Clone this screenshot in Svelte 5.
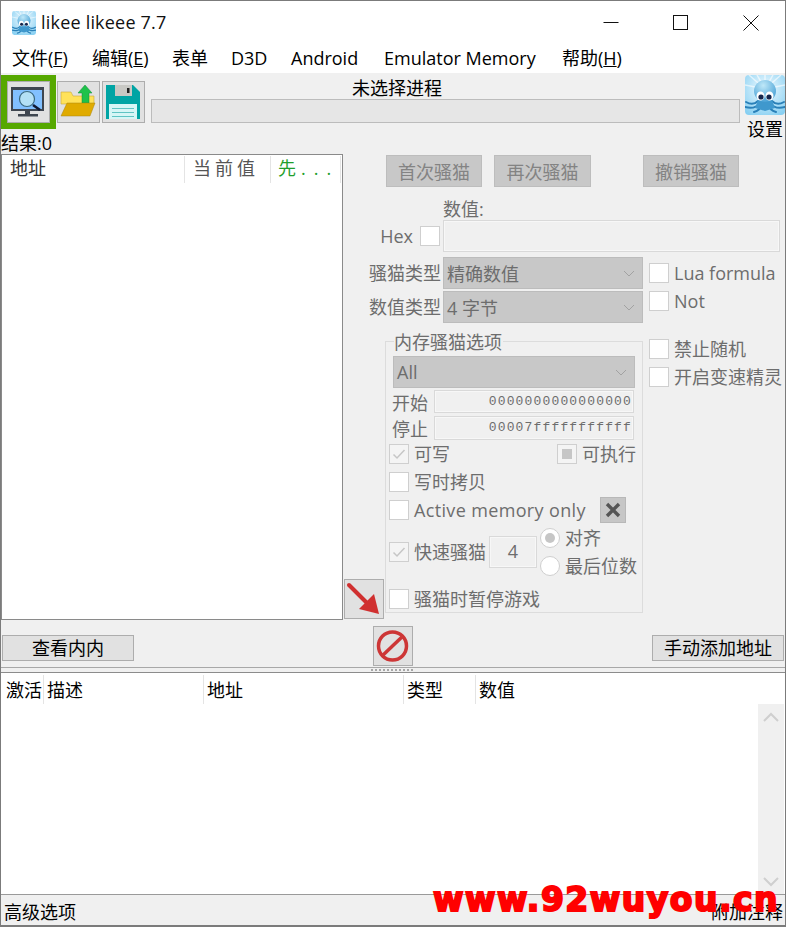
<script>
  const menus = [
    { label: '文件(', key: 'F', end: ')', w: 80 },
    { label: '编辑(', key: 'E', end: ')', w: 80 },
    { label: '表单', w: 59 },
    { label: 'D3D', w: 60 },
    { label: 'Android', w: 93 },
    { label: 'Emulator Memory', w: 178 },
    { label: '帮助(', key: 'H', end: ')', w: 80 }
  ]
  const columns = [
    { label: '激活', w: 43 },
    { label: '描述', w: 160 },
    { label: '地址', w: 200 },
    { label: '类型', w: 72 },
    { label: '数值', w: 100 }
  ]
</script>

{#snippet octopus(size)}
  <svg width={size} height={size} viewBox="0 0 40 40">
    <defs>
      <radialGradient id="oct-{size}" cx="50%" cy="35%" r="75%">
        <stop offset="0" stop-color="#f2fbff" />
        <stop offset="1" stop-color="#86cff2" />
      </radialGradient>
      <radialGradient id="head-{size}" cx="42%" cy="25%" r="75%">
        <stop offset="0" stop-color="#bfe8f8" />
        <stop offset="1" stop-color="#4aa2d6" />
      </radialGradient>
    </defs>
    <rect width="40" height="40" rx="4" fill="url(#oct-{size})" />
    <path d="M20 14L4 0M20 14L12 0M20 14L20 0M20 14L28 0M20 14L36 0M20 14L0 10M20 14L40 10" stroke="#fff" stroke-opacity="0.600" stroke-width="1.500" />
    <path d="M1 27c5 3 9 2 12-1M39 27c-5 3-9 2-12-1M0 32c7 2 12 0 15-4M40 32c-7 2-12 0-15-4M9 37c4-1 7-4 8-8M31 37c-4-1-7-4-8-8" fill="none" stroke="#2a80b8" stroke-width="2" stroke-linecap="round" />
    <path d="M13 25h14l3 8-10 3-10-3z" fill="#3f98cd" />
    <ellipse cx="20" cy="16" rx="11" ry="11" fill="url(#head-{size})" />
    <ellipse cx="15.500" cy="21" rx="4" ry="4.600" fill="#fff" />
    <ellipse cx="24.500" cy="21" rx="4" ry="4.600" fill="#fff" />
    <circle cx="16" cy="22" r="2.600" fill="#16264c" />
    <circle cx="24" cy="22" r="2.600" fill="#16264c" />
  </svg>
{/snippet}

{#snippet check(kind = '')}
  <span class="box" class:filled={kind !== ''}>
    {#if kind === 'tick'}
      <svg width="14" height="14" viewBox="0 0 14 14"><path d="M1.500 7.500l3.500 3.500 7.500-8" fill="none" stroke="#c6c6c6" stroke-width="1.500" /></svg>
    {:else if kind === 'square'}
      <span class="square"></span>
    {/if}
  </span>
{/snippet}

{#snippet chevron()}
  <svg class="chev" width="12" height="7" viewBox="0 0 12 7"><path d="M1 1l5 5 5-5" fill="none" stroke="#a2a2a2" /></svg>
{/snippet}

<div class="window">
  <header class="titlebar">
    <span class="app-icon">{@render octopus(24)}</span>
    <span class="title">likee likeee 7.7</span>
    <div class="winbtns">
      <svg width="16" height="16" viewBox="0 0 16 16"><path d="M0.500 7.500h15" stroke="#111" /></svg>
      <svg width="16" height="16" viewBox="0 0 16 16"><rect x="0.500" y="0.500" width="14" height="14" fill="none" stroke="#111" /></svg>
      <svg width="16" height="16" viewBox="0 0 16 16"><path d="M0.500 0.500l15 15M15.500 0.500l-15 15" stroke="#111" /></svg>
    </div>
  </header>

  <nav class="menubar">
    {#each menus as m}
      <span class="menu" style="width: {m.w}px">{m.label}{#if m.key}<u>{m.key}</u>{m.end}{/if}</span>
    {/each}
  </nav>

  <div class="toolbar">
    <div class="selected">
      <button class="tool" aria-label="选择进程">
        <svg width="41" height="40" viewBox="0 0 41 40">
          <rect x="3" y="5" width="33" height="24" fill="#3f4650" />
          <rect x="5" y="8" width="29" height="19" fill="#82c0ff" />
          <rect x="17" y="29" width="5" height="5" fill="#3f4650" />
          <rect x="10" y="32" width="20" height="2.500" fill="#3f4650" />
          <path d="M25 23l7 5" stroke="#111830" stroke-width="2.600" />
          <circle cx="19" cy="17" r="7.500" fill="#b4e0f5" stroke="#3c6a80" stroke-width="1.200" />
        </svg>
      </button>
    </div>
    <button class="tool" aria-label="打开">
      <svg width="41" height="40" viewBox="0 0 41 40">
        <path d="M3 10h10l2 4h21v8H3z" fill="#ffe25a" stroke="#c9a93a" stroke-width="0.600" />
        <path d="M27 3l7 8h-3v10h-7V11h-4z" fill="#1ec24a" stroke="#14883a" stroke-width="0.500" />
        <path d="M9 21h28l-5 13H3z" fill="#e0ab00" stroke="#a88410" stroke-width="0.500" />
      </svg>
    </button>
    <button class="tool save" aria-label="保存">
      <svg width="41" height="40" viewBox="0 0 41 40">
        <path d="M3 3h27l7 7v27H3z" fill="#00a4a4" />
        <rect x="12" y="3" width="17" height="11" fill="#c8c8c4" />
        <rect x="24" y="6" width="2.500" height="5" fill="#222" />
        <rect x="6" y="22" width="28" height="15" fill="#d6f6f6" />
        <path d="M9 26.500h22M9 30.500h22M9 34.500h22" stroke="#5fc4c4" />
      </svg>
    </button>
    <div class="process">
      <span class="process-name">未选择进程</span>
      <div class="progress"></div>
    </div>
    <div class="settings">
      {@render octopus(40)}
      <span>设置</span>
    </div>
  </div>

  <div class="count">结果:0</div>

  <div class="main">
    <section class="found">
      <div class="found-head">
        <span class="fh addr">地址</span>
        <span class="fh cur">当前值</span>
        <span class="fh prev">先<span class="dots">...</span></span>
      </div>
    </section>

    <section class="scan">
      <div class="scan-buttons">
        <button class="off first">首次骚猫</button>
        <button class="off next">再次骚猫</button>
        <button class="off undo">撤销骚猫</button>
      </div>

      <div class="value-label">数值:</div>
      <div class="hex-row">
        <span class="hex">Hex</span>
        {@render check()}
        <div class="value-input"></div>
      </div>

      <div class="type-row">
        <span class="type-label">骚猫类型</span>
        <div class="select wide"><span>精确数值</span>{@render chevron()}</div>
        <label class="opt lua">{@render check()}<span>Lua formula</span></label>
      </div>
      <div class="type-row second">
        <span class="type-label">数值类型</span>
        <div class="select wide"><span>4 字节</span>{@render chevron()}</div>
        <label class="opt not">{@render check()}<span>Not</span></label>
      </div>

      <div class="lower">
        <div class="arrow-col">
          <button class="icon-btn" aria-label="添加">
            <svg width="38" height="38" viewBox="0 0 38 38">
              <path d="M4 5l18 18" stroke="#d03030" stroke-width="4" stroke-linecap="round" />
              <path d="M34 34L14 29l15-15z" fill="#d03030" />
            </svg>
          </button>
        </div>

        <div class="group">
          <span class="legend">内存骚猫选项</span>
          <div class="select all"><span>All</span>{@render chevron()}</div>
          <div class="range first-range"><span>开始</span><div class="addr-field">0000000000000000</div></div>
          <div class="range second-range"><span>停止</span><div class="addr-field">00007fffffffffff</div></div>
          <div class="row r-write">
            <label class="opt">{@render check('tick')}<span>可写</span></label>
            <label class="opt exec">{@render check('square')}<span>可执行</span></label>
          </div>
          <div class="row r-copy"><label class="opt">{@render check()}<span>写时拷贝</span></label></div>
          <div class="row r-active">
            <label class="opt">{@render check()}<span class="en">Active memory only</span></label>
            <button class="x-btn" aria-label="关闭">
              <svg width="16" height="16" viewBox="0 0 16 16"><path d="M2 2l12 12M14 2L2 14" stroke="#555" stroke-width="3.400" /></svg>
            </button>
          </div>
          <div class="row r-fast">
            <label class="opt">{@render check('tick')}<span>快速骚猫</span></label>
            <div class="align-field">4</div>
            <div class="radios">
              <label class="opt"><span class="radio on"></span><span>对齐</span></label>
              <label class="opt"><span class="radio"></span><span>最后位数</span></label>
            </div>
          </div>
          <div class="row r-pause"><label class="opt">{@render check()}<span>骚猫时暂停游戏</span></label></div>
        </div>

        <div class="side-opts">
          <label class="opt">{@render check()}<span>禁止随机</span></label>
          <label class="opt">{@render check()}<span>开启变速精灵</span></label>
        </div>
      </div>
    </section>
  </div>

  <div class="actions">
    <button class="plain view">查看内内</button>
    <button class="icon-btn stop" aria-label="停止">
      <svg width="38" height="38" viewBox="0 0 38 38">
        <circle cx="18.500" cy="19" r="14" fill="none" stroke="#cd3636" stroke-width="3.500" />
        <path d="M8 29L29 9" stroke="#cd3636" stroke-width="3.500" />
      </svg>
    </button>
    <button class="plain add">手动添加地址</button>
  </div>

  <div class="splitter"><span class="grip"></span></div>

  <section class="table">
    <div class="table-head">
      {#each columns as c}
        <span class="th" style="width: {c.w}px">{c.label}</span>
      {/each}
    </div>
    <div class="table-body">
      <div class="scrollbar">
        <svg width="18" height="10" viewBox="0 0 18 10"><path d="M2 9l7-7 7 7" fill="none" stroke="#cfcfcf" stroke-width="2" /></svg>
        <svg width="18" height="10" viewBox="0 0 18 10"><path d="M2 1l7 7 7-7" fill="none" stroke="#cfcfcf" stroke-width="2" /></svg>
      </div>
    </div>
  </section>

  <footer class="status">
    <span>高级选项</span>
    <span>附加注释</span>
  </footer>

  <div class="watermark">www.92wuyou.cn</div>
</div>

<style>
  :global(body) {
    margin: 0;
    background: #f0f0f0;
  }
  .window {
    position: relative;
    width: 786px;
    height: 927px;
    box-sizing: border-box;
    border: 1px solid #7b7b7b;
    border-bottom-width: 2px;
    background: #f0f0f0;
    overflow: hidden;
    font-family: "Open Sans", "Noto Sans CJK SC", sans-serif;
    font-size: 18px;
    color: #000;
  }
  button {
    font: inherit;
    padding: 0;
  }
  .titlebar {
    height: 43px;
    background: #fff;
    display: flex;
    align-items: center;
  }
  .app-icon {
    display: flex;
    margin-left: 11px;
  }
  .title {
    margin: -2px 0 0 5px;
    font-size: 18px;
    letter-spacing: 0.200px;
    color: #111;
  }
  .winbtns {
    margin-left: auto;
    margin-right: 26px;
    display: flex;
    gap: 54px;
  }
  .menubar {
    height: 29px;
    background: #fff;
    display: flex;
    align-items: center;
    padding-left: 11px;
  }
  .menu {
    white-space: nowrap;
    line-height: 29px;
  }
  .toolbar {
    height: 61px;
    display: flex;
    align-items: flex-start;
  }
  .selected {
    width: 43px;
    height: 42px;
    margin-top: 2px;
    padding: 6px;
    background: #56a800;
  }
  .tool {
    width: 43px;
    height: 42px;
    margin-top: 8px;
    box-sizing: border-box;
    border: 1px solid #adadad;
    background: #e1e1e1;
    display: block;
  }
  .selected .tool {
    margin-top: 0;
  }
  .selected + .tool {
    margin-left: 1px;
  }
  .save {
    margin-left: 2px;
  }
  .process {
    width: 589px;
    margin-left: 6px;
    display: flex;
    flex-direction: column;
    align-items: flex-start;
  }
  .process-name {
    height: 26px;
    line-height: 30px;
    margin-left: 201px;
  }
  .progress {
    width: 100%;
    height: 24px;
    box-sizing: border-box;
    border: 1px solid #bcbcbc;
    background: #e6e6e6;
  }
  .settings {
    width: 40px;
    margin-left: 5px;
    margin-top: 2px;
    display: flex;
    flex-direction: column;
    align-items: center;
  }
  .settings span {
    line-height: 28px;
  }
  .count {
    height: 20px;
    line-height: 18px;
  }
  .main {
    height: 466px;
    display: flex;
  }
  .found {
    width: 342px;
    box-sizing: border-box;
    border: 1px solid #8a8a8a;
    background: #fff;
  }
  .found-head {
    height: 28px;
    display: flex;
    align-items: center;
  }
  .fh {
    box-sizing: border-box;
    height: 27px;
    line-height: 25px;
    border-right: 1px solid #e4e4e4;
    white-space: nowrap;
  }
  .addr {
    width: 183px;
    padding-left: 8px;
    color: #333;
  }
  .cur {
    width: 86px;
    padding-left: 8px;
    color: #555;
    letter-spacing: 4px;
  }
  .prev {
    width: 70px;
    padding-left: 7px;
    color: #1f9e2c;
  }
  .dots {
    margin-left: 5px;
    letter-spacing: 8px;
  }
  .scan {
    flex: 1;
    color: #6d6d6d;
  }
  .scan-buttons {
    display: flex;
    margin: 1px 0 0 43px;
  }
  .off {
    height: 32px;
    box-sizing: border-box;
    border: 1px solid #bdbdbd;
    background: #c8c8c8;
    color: #838383;
  }
  .first { width: 96px; }
  .next { width: 97px; margin-left: 12px; }
  .undo { width: 96px; margin-left: 52px; }
  .value-label {
    height: 20px;
    line-height: 20px;
    margin: 12px 0 1px 100px;
  }
  .hex-row {
    height: 32px;
    display: flex;
    align-items: center;
  }
  .hex {
    width: 70px;
    margin-right: 7px;
    text-align: right;
  }
  .value-input {
    width: 337px;
    height: 32px;
    margin-left: 3px;
    box-sizing: border-box;
    border: 1px solid #d9d9d9;
    outline: 1px solid #f7f7f7;
    outline-offset: -2px;
    background: #f0f0f0;
  }
  .type-row {
    display: flex;
    align-items: flex-start;
    height: 32px;
    margin-top: 5px;
  }
  .type-row.second {
    margin-top: 2px;
  }
  .type-label {
    width: 100px;
    box-sizing: border-box;
    padding-left: 26px;
    line-height: 32px;
    white-space: nowrap;
  }
  .select {
    height: 32px;
    box-sizing: border-box;
    border: 1px solid #bcbcbc;
    background: #c8c8c8;
    display: flex;
    align-items: center;
    justify-content: space-between;
    padding: 0 7px 0 3px;
  }
  .wide {
    width: 200px;
  }
  .opt {
    height: 20px;
    line-height: 20px;
    display: flex;
    align-items: center;
    gap: 5px;
    flex: none;
    white-space: nowrap;
  }
  .lua {
    margin: 6px 0 0 6px;
  }
  .not {
    margin: 0 0 0 6px;
  }
  .box {
    width: 20px;
    height: 20px;
    flex: none;
    box-sizing: border-box;
    border: 1px solid #cfcfcf;
    background: #fff;
    display: inline-flex;
    align-items: center;
    justify-content: center;
  }
  .box.filled {
    background: #f4f4f4;
  }
  .square {
    width: 10px;
    height: 10px;
    background: #c6c6c6;
  }
  .lower {
    display: flex;
    height: 281px;
    margin-top: 16px;
  }
  .arrow-col {
    width: 42px;
    display: flex;
    align-items: flex-end;
    padding: 0 0 1px 1px;
    box-sizing: border-box;
  }
  .icon-btn {
    width: 40px;
    height: 40px;
    box-sizing: border-box;
    border: 1px solid #adadad;
    background: #e1e1e1;
    display: flex;
    align-items: center;
    justify-content: center;
  }
  .group {
    width: 258px;
    height: 272px;
    margin-top: 2px;
    box-sizing: border-box;
    border: 1px solid #dcdcdc;
    padding: 0 7px;
    display: flex;
    flex-direction: column;
  }
  .legend {
    align-self: flex-start;
    height: 20px;
    line-height: 20px;
    margin: -10px 0 0 1px;
    padding: 0 1px 0 0;
    background: #f0f0f0;
  }
  .all {
    width: 242px;
    margin-top: 4px;
    flex: none;
  }
  .range {
    display: flex;
    align-items: center;
    width: 242px;
    flex: none;
    margin-left: -1px;
  }
  .range span {
    width: 42px;
    flex: none;
  }
  .first-range {
    height: 23px;
    margin-top: 2px;
  }
  .second-range {
    height: 24px;
    margin-top: 3px;
  }
  .addr-field {
    width: 201px;
    height: 100%;
    box-sizing: border-box;
    border: 1px solid #d9d9d9;
    outline: 1px solid #f7f7f7;
    outline-offset: -2px;
    text-align: right;
    padding-right: 1px;
    font-family: "Liberation Mono", monospace;
    font-size: 13px;
    letter-spacing: 1.150px;
    line-height: 21px;
  }
  .row {
    display: flex;
    align-items: center;
    margin-left: -4px;
    flex: none;
  }
  .r-write {
    height: 20px;
    margin-top: 4px;
  }
  .exec {
    margin-left: 107px;
  }
  .r-copy {
    height: 20px;
    margin-top: 8px;
  }
  .r-active {
    height: 26px;
    margin-top: 5px;
  }
  .en {
    letter-spacing: 0.350px;
  }
  .x-btn {
    width: 26px;
    height: 26px;
    flex: none;
    margin-left: 14px;
    box-sizing: border-box;
    border: 1px solid #b8b8b8;
    background: #c6c6c6;
    display: flex;
    align-items: center;
    justify-content: center;
  }
  .r-fast {
    height: 48px;
    margin-top: 5px;
  }
  .align-field {
    width: 48px;
    height: 32px;
    flex: none;
    margin-left: 3px;
    box-sizing: border-box;
    border: 1px solid #d9d9d9;
    outline: 1px solid #f7f7f7;
    outline-offset: -2px;
    text-align: center;
    line-height: 29px;
  }
  .radios {
    display: flex;
    flex-direction: column;
    flex: none;
    gap: 8px;
    margin-left: 3px;
  }
  .radio {
    width: 20px;
    height: 20px;
    flex: none;
    box-sizing: border-box;
    border: 1px solid #cfcfcf;
    border-radius: 50%;
    background: #fff;
    display: flex;
    align-items: center;
    justify-content: center;
  }
  .radio.on::after {
    content: "";
    width: 10px;
    height: 10px;
    border-radius: 50%;
    background: #c6c6c6;
  }
  .r-pause {
    height: 20px;
    margin-top: 13px;
  }
  .side-opts {
    margin-left: 6px;
    display: flex;
    flex-direction: column;
    gap: 8px;
  }
  .actions {
    height: 47px;
    display: flex;
    align-items: flex-start;
  }
  .plain {
    width: 132px;
    height: 26px;
    margin-top: 15px;
    box-sizing: border-box;
    border: 1px solid #adadad;
    background: #e1e1e1;
    color: #000;
    line-height: 22px;
  }
  .view {
    margin-left: 1px;
  }
  .stop {
    margin: 6px 0 0 239px;
  }
  .add {
    margin-left: auto;
    margin-right: 1px;
  }
  .splitter {
    height: 4px;
    border-top: 1px solid #a8a8a8;
    border-bottom: 1px solid #8c8c8c;
    display: flex;
    align-items: center;
  }
  .grip {
    width: 42px;
    height: 2px;
    margin-left: 370px;
    background: repeating-linear-gradient(90deg, #a6a6a6 0 2px, #f0f0f0 2px 4px);
  }
  .table {
    height: 221px;
    background: #fff;
    display: flex;
    flex-direction: column;
  }
  .table-head {
    height: 31px;
    flex: none;
    display: flex;
    align-items: flex-end;
  }
  .th {
    box-sizing: border-box;
    height: 29px;
    line-height: 31px;
    padding-left: 3px;
    border-right: 1px solid #e4e4e4;
    white-space: nowrap;
  }
  .th:first-child {
    padding-left: 5px;
  }
  .th:last-child {
    border-right: 0;
  }
  .table-body {
    flex: 1;
    display: flex;
    justify-content: flex-end;
  }
  .scrollbar {
    width: 26px;
    margin-right: 1px;
    background: #f0f0f0;
    display: flex;
    flex-direction: column;
    align-items: center;
    justify-content: space-between;
    padding: 8px 0 7px;
    box-sizing: border-box;
  }
  .status {
    height: 31px;
    box-sizing: border-box;
    border-top: 1px solid #9a9a9a;
    display: flex;
    justify-content: space-between;
    align-items: center;
    padding: 2px 1px 0 3px;
    background: #f0f0f0;
  }
  .status span:last-child {
    margin-right: 1px;
  }
  .watermark {
    position: absolute;
    left: 432px;
    top: 879px;
    font-family: "DejaVu Sans", sans-serif;
    font-weight: 700;
    font-size: 33px;
    line-height: 40px;
    letter-spacing: 1.500px;
    color: #f00;
    -webkit-text-stroke: 2px #f00;
    white-space: nowrap;
  }
</style>
